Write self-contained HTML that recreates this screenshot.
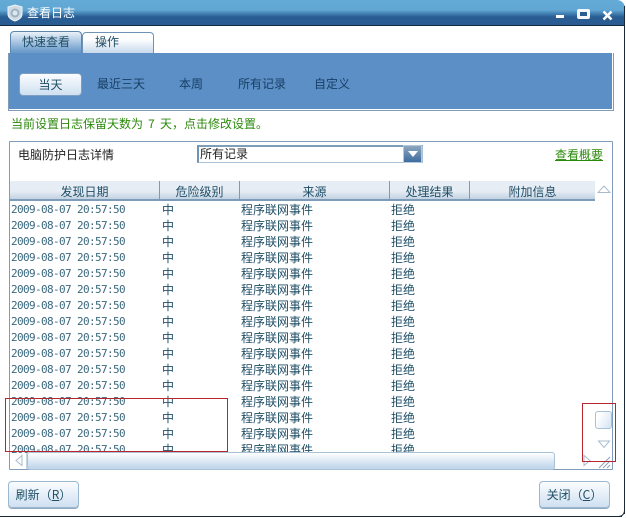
<!DOCTYPE html>
<html><head><meta charset="utf-8"><style>
html,body{margin:0;padding:0;background:#fff}
#r{position:relative;width:626px;height:518px;overflow:hidden;background:#fff;font:12px/16px "WenQuanYi Zen Hei","Noto Sans CJK SC",sans-serif;color:#1f4e66}
#r div,#r span.a{position:absolute;box-sizing:border-box}
.t{white-space:nowrap}
.m{font:11px/16px "DejaVu Sans Mono",monospace;letter-spacing:-.62px;left:11px;white-space:nowrap;color:#3a687e;margin-top:1px}
.c{white-space:nowrap;color:#1f4e66;margin-top:1px}
.h{top:182px;height:20px;line-height:19px;text-align:center;color:#1f4e66;white-space:nowrap}
.s{top:181px;width:1px;height:19px;background:#7a9cbc}
.btn{border:1px solid #9ab8d0;border-radius:4px;background:linear-gradient(#fbfdff,#cfe0f1);box-shadow:0 1px 0 #8fa9c3;text-align:center;color:#1f4e66}
</style></head><body><div id="r">
<div style="left:0;top:0;width:625px;height:26px;background:linear-gradient(#64aad6 0,#62a7d3 10px,#3f7cae 14px,#285c93 17px,#2a5c92 25px);border-bottom:1px solid #10293f;border-top-right-radius:8px"></div>
<svg style="position:absolute;left:7px;top:4px" width="16" height="18" viewBox="0 0 16 18"><path d="M1 3 L8 1 L15 3 V10 C15 14 11 16 8 17 C5 16 1 14 1 10Z" fill="#cfdbe4" stroke="#eef3f7"/><circle cx="8" cy="9" r="4.5" fill="#9db2c2"/><circle cx="8" cy="9" r="2.5" fill="#dfe7ed"/></svg>
<div class="t" style="left:27px;top:5px;color:#fff;font-size:12px">查看日志</div>
<div style="left:556px;top:15px;width:8px;height:3px;background:#fff"></div>
<div style="left:577px;top:9px;width:13px;height:10px;border:3px solid #f4f8fb;border-radius:2px;background:#2a5c92"></div>
<svg style="position:absolute;left:602px;top:10px" width="11" height="11"><path d="M1.5 1.5 L9.5 9.5 M9.5 1.5 L1.5 9.5" stroke="#fff" stroke-width="2.6"/></svg>
<div style="left:624px;top:6px;width:1px;height:508px;background:#1a2a38"></div>
<div style="left:0;top:516px;width:622px;height:1px;background:#1a2a38"></div>
<svg style="position:absolute;left:618px;top:510px" width="8" height="8"><path d="M6.5 0 C6.5 4 4 6.5 0 6.5" fill="none" stroke="#1a2a38"/></svg>

<div style="left:10px;top:31px;width:72px;height:23px;background:linear-gradient(#e9f1f8,#6a9bcb 90%);border:1px solid #5e87ad;border-bottom:0;border-radius:4px 4px 0 0"></div>
<div class="t" style="left:22px;top:34px;color:#1f4e66">快速查看</div>
<div style="left:82px;top:32px;width:72px;height:21px;background:linear-gradient(#fff 30%,#c7d9ec);border:1px solid #6f93b5;border-bottom:0;border-radius:4px 4px 0 0"></div>
<div class="t" style="left:95px;top:34px;color:#1f4e66">操作</div>

<div style="left:8px;top:53px;width:606px;height:58px;background:#5b8fc5;border-right:1px solid #7f9db9;border-bottom:1px solid #7f9db9;border-left:1px solid #7f9db9;box-shadow:inset -1px -1px 0 #fff"></div>
<div class="btn" style="left:19px;top:73px;width:63px;height:23px;line-height:21px;border-color:#7d9fc4;box-shadow:none">当天</div>
<div class="t" style="left:97px;top:76px;color:#173f66">最近三天</div>
<div class="t" style="left:179px;top:76px;color:#173f66">本周</div>
<div class="t" style="left:238px;top:76px;color:#173f66">所有记录</div>
<div class="t" style="left:314px;top:76px;color:#173f66">自定义</div>

<div class="t" style="left:11px;top:116px;color:#2b8a0c">当前设置日志保留天数为<span style="display:inline-block;width:17px;text-align:center">7</span>天，点击修改设置。</div>

<div style="left:9px;top:141px;width:604px;height:329px;border:1px solid #7f9db9;border-radius:1px"></div>
<div class="t" style="left:18px;top:147px;color:#222">电脑防护日志详情</div>
<div style="left:197px;top:145px;width:226px;height:18px;background:#fff;border:1px solid #a9c1d6;border-left:2px solid #6f93b5;border-top:2px solid #7d9db9"></div>
<div class="t" style="left:200px;top:146px;color:#222">所有记录</div>
<div style="left:403px;top:145px;width:19px;height:18px;background:linear-gradient(#8fa6be,#3f6c9e);border:1px solid #b5c9da"></div>
<svg style="position:absolute;left:407px;top:151px" width="12" height="7"><path d="M1 0 H11 L6 6Z" fill="#fff"/></svg>
<div class="t" style="left:555px;top:147px;color:#2b8a0c;text-decoration:underline">查看概要</div>

<div style="left:10px;top:181px;width:585px;height:20px;background:linear-gradient(#e7edf4 55%,#c3d2e2);border-bottom:2px solid #7d9cba"></div>
<div class="h" style="left:10px;width:149px">发现日期</div>
<div class="h" style="left:160px;width:79px">危险级别</div>
<div class="h" style="left:240px;width:149px">来源</div>
<div class="h" style="left:390px;width:79px">处理结果</div>
<div class="h" style="left:470px;width:125px">附加信息</div>
<div class="s" style="left:159px"></div><div class="s" style="left:239px"></div><div class="s" style="left:389px"></div><div class="s" style="left:469px"></div>

<div style="left:10px;top:201px;width:585px;height:252px;overflow:hidden">
<div class="m" style="left:1px;top:0">2009-08-07 20:57:50</div><div class="c" style="left:152px;top:0">中</div><div class="c" style="left:231px;top:0">程序联网事件</div><div class="c" style="left:381px;top:0">拒绝</div>
<div class="m" style="left:1px;top:16px">2009-08-07 20:57:50</div><div class="c" style="left:152px;top:16px">中</div><div class="c" style="left:231px;top:16px">程序联网事件</div><div class="c" style="left:381px;top:16px">拒绝</div>
<div class="m" style="left:1px;top:32px">2009-08-07 20:57:50</div><div class="c" style="left:152px;top:32px">中</div><div class="c" style="left:231px;top:32px">程序联网事件</div><div class="c" style="left:381px;top:32px">拒绝</div>
<div class="m" style="left:1px;top:48px">2009-08-07 20:57:50</div><div class="c" style="left:152px;top:48px">中</div><div class="c" style="left:231px;top:48px">程序联网事件</div><div class="c" style="left:381px;top:48px">拒绝</div>
<div class="m" style="left:1px;top:64px">2009-08-07 20:57:50</div><div class="c" style="left:152px;top:64px">中</div><div class="c" style="left:231px;top:64px">程序联网事件</div><div class="c" style="left:381px;top:64px">拒绝</div>
<div class="m" style="left:1px;top:80px">2009-08-07 20:57:50</div><div class="c" style="left:152px;top:80px">中</div><div class="c" style="left:231px;top:80px">程序联网事件</div><div class="c" style="left:381px;top:80px">拒绝</div>
<div class="m" style="left:1px;top:96px">2009-08-07 20:57:50</div><div class="c" style="left:152px;top:96px">中</div><div class="c" style="left:231px;top:96px">程序联网事件</div><div class="c" style="left:381px;top:96px">拒绝</div>
<div class="m" style="left:1px;top:112px">2009-08-07 20:57:50</div><div class="c" style="left:152px;top:112px">中</div><div class="c" style="left:231px;top:112px">程序联网事件</div><div class="c" style="left:381px;top:112px">拒绝</div>
<div class="m" style="left:1px;top:128px">2009-08-07 20:57:50</div><div class="c" style="left:152px;top:128px">中</div><div class="c" style="left:231px;top:128px">程序联网事件</div><div class="c" style="left:381px;top:128px">拒绝</div>
<div class="m" style="left:1px;top:144px">2009-08-07 20:57:50</div><div class="c" style="left:152px;top:144px">中</div><div class="c" style="left:231px;top:144px">程序联网事件</div><div class="c" style="left:381px;top:144px">拒绝</div>
<div class="m" style="left:1px;top:160px">2009-08-07 20:57:50</div><div class="c" style="left:152px;top:160px">中</div><div class="c" style="left:231px;top:160px">程序联网事件</div><div class="c" style="left:381px;top:160px">拒绝</div>
<div class="m" style="left:1px;top:176px">2009-08-07 20:57:50</div><div class="c" style="left:152px;top:176px">中</div><div class="c" style="left:231px;top:176px">程序联网事件</div><div class="c" style="left:381px;top:176px">拒绝</div>
<div class="m" style="left:1px;top:192px">2009-08-07 20:57:50</div><div class="c" style="left:152px;top:192px">中</div><div class="c" style="left:231px;top:192px">程序联网事件</div><div class="c" style="left:381px;top:192px">拒绝</div>
<div class="m" style="left:1px;top:208px">2009-08-07 20:57:50</div><div class="c" style="left:152px;top:208px">中</div><div class="c" style="left:231px;top:208px">程序联网事件</div><div class="c" style="left:381px;top:208px">拒绝</div>
<div class="m" style="left:1px;top:224px">2009-08-07 20:57:50</div><div class="c" style="left:152px;top:224px">中</div><div class="c" style="left:231px;top:224px">程序联网事件</div><div class="c" style="left:381px;top:224px">拒绝</div>
<div class="m" style="left:1px;top:240px">2009-08-07 20:57:50</div><div class="c" style="left:152px;top:240px">中</div><div class="c" style="left:231px;top:240px">程序联网事件</div><div class="c" style="left:381px;top:240px">拒绝</div>
</div>

<svg style="position:absolute;left:597px;top:185px" width="14" height="9"><path d="M7 1 L13 7.5 H1Z" fill="#fff" stroke="#a9bccd"/></svg>
<div style="left:595px;top:411px;width:17px;height:18px;border:1px solid #aac0d4;border-radius:3px;background:linear-gradient(120deg,#fff 20%,#d3e3f3)"></div>
<svg style="position:absolute;left:597px;top:440px" width="14" height="9"><path d="M1.5 1 H12.5 L7 7.5Z" fill="#fff" stroke="#a9bccd"/></svg>

<div style="left:10px;top:453px;width:17px;height:16px;background:#fff;border-right:1px solid #c5d3e0"></div>
<svg style="position:absolute;left:14px;top:454px" width="10" height="13"><path d="M8 1.5 V11.5 L2 6.5Z" fill="#fff" stroke="#a9bccd"/></svg>
<div style="left:27px;top:452px;width:528px;height:18px;border:1px solid #a9c0d5;border-radius:3px;background:linear-gradient(#fff,#c2d7ec 90%)"></div>
<svg style="position:absolute;left:582px;top:454px" width="10" height="13"><path d="M2 1.5 V11.5 L8 6.5Z" fill="#fff" stroke="#a9bccd"/></svg>
<svg style="position:absolute;left:597px;top:455px" width="14" height="14"><path d="M2 13 L13 2 M6 13 L13 6 M10 13 L13 10" stroke="#8ea4b8" fill="none"/></svg>

<div style="left:5px;top:398px;width:223px;height:54px;border:1px solid #b8252c"></div>
<div style="left:582px;top:403px;width:34px;height:59px;border:1px solid #b8252c"></div>

<div class="btn" style="left:8px;top:481px;width:71px;height:27px;line-height:25px">刷新（<u>R</u>）</div>
<div class="btn" style="left:539px;top:481px;width:71px;height:27px;line-height:25px">关闭（<u>C</u>）</div>
</div></body></html>
